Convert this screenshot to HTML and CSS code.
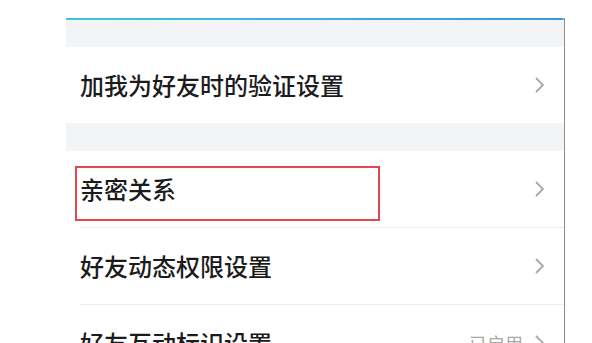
FILE: index.html
```html
<!DOCTYPE html>
<html lang="zh-CN">
<head>
<meta charset="utf-8">
<link rel="stylesheet" href="styles.css">
</head>
<body>
<div class="screen">
  <div class="topline"></div>
  <div class="gap gap-first"></div>
  <div class="row">
    <span class="label">加我为好友时的验证设置</span>
    <span class="right"><svg class="chev" viewBox="0 0 9 16" width="9" height="16"><polyline points="1,1 8,8 1,15" /></svg></span>
  </div>
  <div class="gap"></div>
  <div class="row row-marked">
    <span class="label">亲密关系</span>
    <span class="right"><svg class="chev" viewBox="0 0 9 16" width="9" height="16"><polyline points="1,1 8,8 1,15" /></svg></span>
    <div class="mark"></div>
  </div>
  <div class="row">
    <span class="label">好友动态权限设置</span>
    <span class="right"><svg class="chev" viewBox="0 0 9 16" width="9" height="16"><polyline points="1,1 8,8 1,15" /></svg></span>
  </div>
  <div class="row">
    <span class="label">好友互动标识设置</span>
    <span class="right"><span class="value">已启用</span><svg class="chev" viewBox="0 0 9 16" width="9" height="16"><polyline points="1,1 8,8 1,15" /></svg></span>
  </div>
</div>
</body>
</html>
```

FILE: styles.css
```css
html, body {
  margin: 0;
  padding: 0;
  background: #ffffff;
  height: 343px;
  overflow: hidden;
}
body {
  font-family: "Noto Sans CJK SC", "Noto Sans", sans-serif;
  color: #1c1c1c;
}
.screen {
  margin-left: 66px;
  margin-top: 18px;
  width: 498px;
  border-right: 1px solid #8c8c8c;
  background: #ffffff;
}
.topline {
  height: 2px;
  background: linear-gradient(to right, #3cc6d8, #3fa9e2 60%, #3b97dc);
  border-top-right-radius: 2px;
}
.gap {
  height: 28px;
  background: #f3f4f6;
}
.gap-first {
  height: 27px;
}
.row {
  position: relative;
  display: flex;
  align-items: center;
  justify-content: space-between;
  height: 76px;
  padding: 0 20px 0 14px;
}
.row + .row {
  border-top: 1px solid #ececec;
  margin-left: 14px;
  padding-left: 0;
}
.label {
  font-size: 24px;
  line-height: 1;
  font-weight: 500;
}
.right {
  display: flex;
  align-items: center;
  gap: 12px;
}
.value {
  font-size: 18px;
  color: #a8a8a8;
}
.chev {
  display: block;
  fill: none;
  stroke: #a9a9a9;
  stroke-width: 1.8;
}
.mark {
  position: absolute;
  left: 9px;
  top: 15px;
  width: 301px;
  height: 51px;
  border: 2px solid #e2464f;
}
```
